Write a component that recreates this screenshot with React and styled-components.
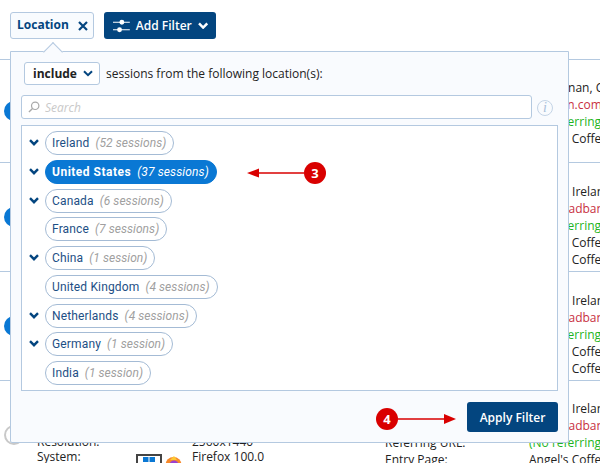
import React from 'react'
import styled, { createGlobalStyle } from 'styled-components'

const GlobalStyle = createGlobalStyle`
  html, body {
    margin: 0;
    padding: 0;
    background: #fff;
  }
  body {
    font-family: 'Open Sans', 'Noto Sans', sans-serif;
    font-size: 12px;
    color: #222;
  }
`

const sessions = [
  {
    dot: 'on',
    height: 103,
    pad: 19,
    left: ['Visitor IP:', 'Device:', 'Resolution:', 'System:'],
    right: [
      ['Location:', 'Cloughnan, Co. Cork'],
      ['ISP:', 'Amazon.com', 'red'],
      ['Referring URL:', '(No referring URL)', 'green'],
      ['Entry Page:', "Angel's Coffee"],
    ],
  },
  {
    dot: 'on',
    height: 109,
    pad: 20,
    left: ['Visitor IP:', 'Device:', 'Resolution:', 'System:'],
    right: [
      ['Location:', 'Dublin, Ireland'],
      ['ISP:', 'Netbroadband', 'red'],
      ['Referring URL:', '(No referring URL)', 'green'],
      ['Entry Page:', "Angel's Coffee"],
      ['Exit Page:', "Angel's Coffee"],
    ],
  },
  {
    dot: 'on',
    height: 109,
    pad: 20,
    left: ['Visitor IP:', 'Device:', 'Resolution:', 'System:'],
    right: [
      ['Location:', 'Dublin, Ireland'],
      ['ISP:', 'Netbroadband', 'red'],
      ['Referring URL:', '(No referring URL)', 'green'],
      ['Entry Page:', "Angel's Coffee"],
      ['Exit Page:', "Angel's Coffee"],
    ],
  },
  {
    dot: 'off',
    height: 108,
    pad: 19,
    left: ['Visitor IP:', 'Device:', 'Resolution:', 'System:'],
    values: ['1.1.1.1', 'Desktop', '2560x1440', 'Firefox 100.0'],
    right: [
      ['Location:', 'Dublin, Ireland'],
      ['ISP:', 'Netbroadband', 'red'],
      ['Referring URL:', '(No referring URL)', 'green'],
      ['Entry Page:', "Angel's Coffee"],
    ],
  },
]

const locations = [
  { name: 'Ireland', count: '52 sessions', expand: true },
  { name: 'United States', count: '37 sessions', expand: true, active: true },
  { name: 'Canada', count: '6 sessions', expand: true },
  { name: 'France', count: '7 sessions' },
  { name: 'China', count: '1 session', expand: true },
  { name: 'United Kingdom', count: '4 sessions' },
  { name: 'Netherlands', count: '4 sessions', expand: true },
  { name: 'Germany', count: '1 session', expand: true },
  { name: 'India', count: '1 session' },
]

const Chevron = ({ size = 10, color = '#03457f', width = 2.4 }) => (
  <svg width={size} height={size * 0.7} viewBox="0 0 10 7" fill="none">
    <path d="M1 1.2 L5 5.2 L9 1.2" stroke={color} strokeWidth={width} />
  </svg>
)

const App = () => (
  <Page>
    <GlobalStyle />
    <Toolbar>
      <FilterTag>
        <span>Location</span>
        <TagClose>
          <svg width="10" height="10" viewBox="0 0 10 10">
            <path d="M1 1 L9 9 M9 1 L1 9" stroke="#03457f" strokeWidth="2.2" />
          </svg>
        </TagClose>
      </FilterTag>
      <AddFilter>
        <svg width="18" height="14" viewBox="0 0 18 14" fill="none">
          <path d="M0 3 H18 M0 11 H18" stroke="#fff" strokeWidth="1.2" />
          <circle cx="9.5" cy="3" r="2.6" fill="#fff" />
          <circle cx="7" cy="11" r="2.6" fill="#fff" />
        </svg>
        <span>Add Filter</span>
        <Chevron size={11} color="#fff" />
      </AddFilter>
    </Toolbar>

    {sessions.map((s, i) => (
      <SessionRow key={i} $height={s.height} $pad={s.pad}>
        <Dot $state={s.dot} />
        <LabelColumn>
          {s.left.map(l => <div key={l}>{l}</div>)}
        </LabelColumn>
        <ValueColumn>
          {(s.values || []).map(v => <div key={v}>{v}</div>)}
        </ValueColumn>
        {s.values && (
          <OsIcons>
            <svg width="26" height="22" viewBox="0 0 26 22">
              <rect x="1" y="1" width="24" height="16" fill="#fff" stroke="#444" strokeWidth="2" />
              <path d="M7 3 H12.5 V8 H7 Z M13.5 3 H19 V8 H13.5 Z M7 9 H12.5 V14 H7 Z M13.5 9 H19 V14 H13.5 Z" fill="#0a78d4" />
            </svg>
            <svg width="17" height="17" viewBox="0 0 17 17">
              <circle cx="8.5" cy="9" r="8" fill="#f7892a" />
              <circle cx="9" cy="9" r="4.5" fill="#9b3fd0" />
              <path d="M5 4 L9 0 L12 4 Z" fill="#fdc833" />
            </svg>
          </OsIcons>
        )}
        <Details>
          {s.right.map(([label, value, tone]) => (
            <DetailLine key={label}>
              <DetailLabel>{label}</DetailLabel>
              <DetailValue $tone={tone}>{value}</DetailValue>
            </DetailLine>
          ))}
        </Details>
      </SessionRow>
    ))}

    <Popover>
      <PopoverHead>
        <ModeSelect>
          <span>include</span>
          <Chevron size={10} width={2} />
        </ModeSelect>
        <span>sessions from the following location(s):</span>
      </PopoverHead>
      <SearchRow>
        <SearchBox>
          <svg width="12" height="12" viewBox="0 0 13 13" fill="none">
            <circle cx="7.8" cy="5.2" r="4" stroke="#a9a9a9" strokeWidth="1.3" />
            <path d="M4.9 8.1 L1 12" stroke="#a9a9a9" strokeWidth="1.5" />
          </svg>
          <SearchInput placeholder="Search" readOnly />
        </SearchBox>
        <InfoIcon>i</InfoIcon>
      </SearchRow>
      <LocationList>
        {locations.map(loc => (
          <LocationRow key={loc.name}>
            <Caret>{loc.expand && <Chevron size={10} />}</Caret>
            <Pill $active={loc.active}>
              <PillName $active={loc.active}>{loc.name}</PillName>
              <PillCount $active={loc.active}>({loc.count})</PillCount>
            </Pill>
          </LocationRow>
        ))}
      </LocationList>
      <PopoverFoot>
        <ApplyButton>Apply Filter</ApplyButton>
      </PopoverFoot>
    </Popover>

    <Callout $left={247} $top={162}>
      <CalloutArrow $size={57}>
        <svg width="57" height="12" viewBox="0 0 57 12">
          <path d="M12 6 H57" stroke="#d90000" strokeWidth="1.6" />
          <path d="M0 6 L12 1.5 V10.5 Z" fill="#d90000" />
        </svg>
      </CalloutArrow>
      <CalloutBadge>3</CalloutBadge>
    </Callout>
    <Callout $left={376} $top={408}>
      <CalloutBadge>4</CalloutBadge>
      <CalloutArrow $size={58}>
        <svg width="58" height="12" viewBox="0 0 58 12">
          <path d="M0 6 H46" stroke="#d90000" strokeWidth="1.6" />
          <path d="M58 6 L46 1 V11 Z" fill="#d90000" />
        </svg>
      </CalloutArrow>
    </Callout>
  </Page>
)

const Page = styled.div`
  position: relative;
  width: 600px;
  height: 463px;
  overflow: hidden;
  background: #fff;
`

const Toolbar = styled.div`
  display: flex;
  align-items: flex-start;
  gap: 10px;
  height: 47px;
  padding: 12px 0 0 10px;
  border-bottom: 1px solid #b4c9e0;
`

const FilterTag = styled.div`
  display: flex;
  align-items: center;
  justify-content: space-between;
  box-sizing: border-box;
  width: 84px;
  height: 27px;
  padding: 0 5px 3px 6px;
  background: #f8fbfe;
  border: 1px solid #b4c9e0;
  border-radius: 3px;
  font-weight: 700;
  font-size: 12px;
  color: #03457f;
`

const TagClose = styled.span`
  display: flex;
  margin-top: 4px;
`

const AddFilter = styled.button`
  display: flex;
  align-items: center;
  gap: 6px;
  box-sizing: border-box;
  width: 112px;
  height: 27px;
  padding: 0 8px 0 9px;
  background: #03457f;
  border: none;
  border-radius: 3px;
  font-family: inherit;
  font-weight: 600;
  font-size: 12px;
  color: #fff;
  white-space: nowrap;
`

const SessionRow = styled.div`
  display: flex;
  box-sizing: border-box;
  height: ${p => p.$height}px;
  padding-top: ${p => p.$pad}px;
  border-bottom: 1px solid #b4c9e0;
  position: relative;
  white-space: nowrap;
`

const Dot = styled.span`
  position: absolute;
  left: 4px;
  top: 50%;
  width: 20px;
  height: 20px;
  margin-top: -10px;
  box-sizing: border-box;
  border-radius: 50%;
  background: ${p => (p.$state === 'on' ? '#0a78d4' : '#fff')};
  border: ${p => (p.$state === 'on' ? 'none' : '2px solid #c9c9c9')};
`

const LabelColumn = styled.div`
  flex: none;
  width: 155px;
  margin-left: 37px;
  line-height: 15px;
  padding-top: 4px;
`

const ValueColumn = styled.div`
  flex: none;
  width: 193px;
  line-height: 15px;
  padding-top: 4px;
`

const OsIcons = styled.div`
  position: absolute;
  left: 136px;
  top: 73px;
  display: flex;
  align-items: flex-start;
  gap: 3px;

  svg:last-child {
    margin-top: 2px;
  }
`

const Details = styled.div`
  flex: none;
  line-height: 17px;
`

const DetailLine = styled.div`
  display: flex;
`

const DetailLabel = styled.span`
  flex: none;
  width: 144px;
`

const DetailValue = styled.span`
  color: ${p => (p.$tone === 'red' ? '#c8303f' : p.$tone === 'green' ? '#22b422' : '#222')};
`

const Popover = styled.div`
  position: absolute;
  left: 10px;
  top: 51px;
  box-sizing: border-box;
  width: 559px;
  height: 392px;
  padding: 10px 10px 0 10px;
  background: #f9fbfe;
  border: 1px solid #b4c9e0;
  border-radius: 0 0 2px 2px;

  &::before {
    content: '';
    position: absolute;
    left: 35px;
    top: -7px;
    width: 13px;
    height: 13px;
    background: #f9fbfe;
    border-left: 1px solid #b4c9e0;
    border-top: 1px solid #b4c9e0;
    transform: rotate(45deg);
  }
`

const PopoverHead = styled.div`
  display: flex;
  align-items: center;
  gap: 6px;
  padding-left: 3px;
  font-size: 12px;
  color: #222;
`

const ModeSelect = styled.div`
  display: flex;
  align-items: center;
  justify-content: space-between;
  box-sizing: border-box;
  width: 76px;
  height: 23px;
  padding: 0 6px 1px 8px;
  background: #fff;
  border: 1px solid #b4c9e0;
  border-radius: 3px;
  font-weight: 700;
  font-size: 12px;
  color: #222;
`

const SearchRow = styled.div`
  display: flex;
  align-items: center;
  gap: 5px;
  margin-top: 10px;
`

const SearchBox = styled.div`
  display: flex;
  align-items: center;
  gap: 5px;
  box-sizing: border-box;
  width: 511px;
  height: 24px;
  padding: 0 6px;
  background: #fff;
  border: 1px solid #b4c9e0;
  border-radius: 3px;
`

const SearchInput = styled.input`
  flex: 1;
  min-width: 0;
  padding: 0;
  border: none;
  outline: none;
  background: transparent;
  font-family: inherit;
  font-size: 12px;
  font-style: italic;

  &::placeholder {
    color: #c9c9c9;
    opacity: 1;
  }
`

const InfoIcon = styled.span`
  display: flex;
  align-items: center;
  justify-content: center;
  box-sizing: border-box;
  width: 16px;
  height: 16px;
  margin-top: 2px;
  border: 1.5px solid #c4d4e6;
  border-radius: 50%;
  font-family: 'Liberation Serif', serif;
  font-style: italic;
  font-size: 14px;
  line-height: 1;
  color: #a9c0da;
`

const LocationList = styled.div`
  display: flex;
  flex-direction: column;
  align-items: flex-start;
  gap: 4.75px;
  box-sizing: border-box;
  width: 537px;
  height: 266px;
  margin-top: 6px;
  padding: 5px 0 0 0;
  background: #fff;
  border: 1px solid #b4c9e0;
`

const LocationRow = styled.div`
  display: flex;
  align-items: center;
`

const Caret = styled.span`
  display: flex;
  justify-content: center;
  width: 23px;
  padding-bottom: 1px;
`

const Pill = styled.div`
  display: flex;
  align-items: center;
  gap: 6px;
  box-sizing: border-box;
  height: 24px;
  padding: 0 7px 0 6px;
  background: ${p => (p.$active ? '#0a78d4' : '#fff')};
  border: 1px solid ${p => (p.$active ? '#0a78d4' : '#a4bbd5')};
  border-radius: 12px;
  font-family: Roboto, 'Liberation Sans', sans-serif;
  font-size: 12px;
`

const PillName = styled.span`
  font-weight: ${p => (p.$active ? 700 : 400)};
  letter-spacing: ${p => (p.$active ? '0.5px' : '0.15px')};
  color: ${p => (p.$active ? '#fff' : '#1d4f85')};
`

const PillCount = styled.span`
  font-style: italic;
  letter-spacing: ${p => (p.$active ? '0.12px' : '0.05px')};
  color: ${p => (p.$active ? '#fff' : '#a0a0a0')};
`

const PopoverFoot = styled.div`
  display: flex;
  justify-content: flex-end;
  width: 537px;
  margin-top: 11px;
`

const ApplyButton = styled.button`
  width: 91px;
  height: 30px;
  padding: 0;
  background: #03457f;
  border: none;
  border-radius: 3px;
  font-family: inherit;
  font-weight: 600;
  font-size: 12px;
  color: #fff;
`

const Callout = styled.div`
  position: absolute;
  left: ${p => p.$left}px;
  top: ${p => p.$top}px;
  display: flex;
  align-items: center;
`

const CalloutArrow = styled.div`
  display: flex;
  width: ${p => p.$size}px;
`

const CalloutBadge = styled.span`
  display: flex;
  align-items: center;
  justify-content: center;
  width: 22px;
  height: 22px;
  border-radius: 50%;
  background: #d90000;
  font-weight: 700;
  font-size: 13px;
  color: #fff;
`

export default App
